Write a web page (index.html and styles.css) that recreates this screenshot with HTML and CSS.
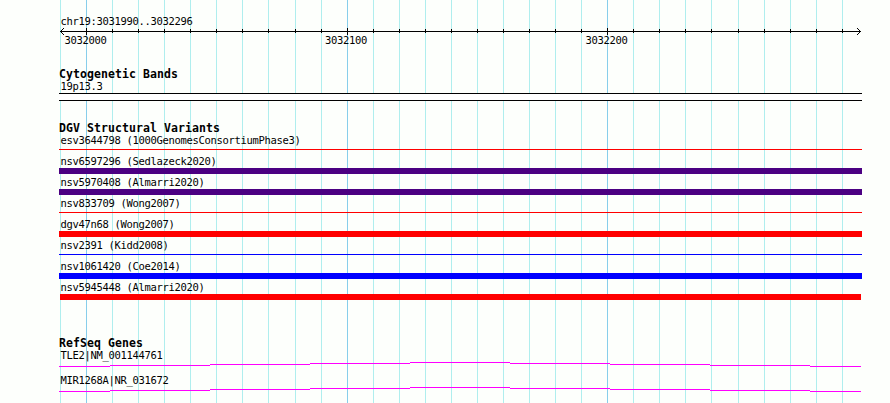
FILE: index.html
```
<!DOCTYPE html>
<html lang="en">
<head>
<meta charset="utf-8">
<title>chr19:3031990..3032296</title>
<link rel="stylesheet" href="styles.css">
</head>
<body>
<main class="browser">
  <svg class="grid" width="890" height="403" shape-rendering="crispEdges" aria-hidden="true">
    <path class="minor" d="M60.5 0V403M112.5 0V403M138.5 0V403M164.5 0V403M190.5 0V403M216.5 0V403M242.5 0V403M268.5 0V403M295.5 0V403M321.5 0V403M373.5 0V403M399.5 0V403M425.5 0V403M451.5 0V403M477.5 0V403M503.5 0V403M529.5 0V403M555.5 0V403M581.5 0V403M633.5 0V403M659.5 0V403M685.5 0V403M711.5 0V403M738.5 0V403M764.5 0V403M790.5 0V403M816.5 0V403M842.5 0V403"/>
    <path class="major" d="M86.5 0V403M347.5 0V403M607.5 0V403"/>
  </svg>
  <section class="ruler">
    <div class="label">chr19:3031990..3032296</div>
    <svg class="axis" width="803" height="7" viewBox="59 28 803 7" shape-rendering="crispEdges">
      <path d="M60 31.5H861M112.5 29v4M138.5 29v4M164.5 29v4M190.5 29v4M216.5 29v4M242.5 29v4M268.5 29v4M295.5 29v4M321.5 29v4M373.5 29v4M399.5 29v4M425.5 29v4M451.5 29v4M477.5 29v4M503.5 29v4M529.5 29v4M555.5 29v4M581.5 29v4M633.5 29v4M659.5 29v4M685.5 29v4M711.5 29v4M738.5 29v4M764.5 29v4M790.5 29v4M816.5 29v4M842.5 29v4M86.5 28v7M347.5 28v7M607.5 28v7"/>
      <path d="M61 30.5h1M62 29.5h1M63 28.5h1M61 32.5h1M62 33.5h1M63 34.5h1M859 30.5h1M858 29.5h1M857 28.5h1M859 32.5h1M858 33.5h1M857 34.5h1"/>
    </svg>
    <div class="scale"><span>3032000</span><span>3032100</span><span>3032200</span></div>
  </section>
  <section class="track bands">
    <h2>Cytogenetic Bands</h2>
    <div class="label">19p13.3</div>
    <div class="band"></div>
  </section>
  <section class="track variants">
    <h2>DGV Structural Variants</h2>
    <div class="variant thin loss"><div class="label">esv3644798 (1000GenomesConsortiumPhase3)</div><div class="bar"></div></div>
    <div class="variant inversion"><div class="label">nsv6597296 (Sedlazeck2020)</div><div class="bar"></div></div>
    <div class="variant inversion"><div class="label">nsv5970408 (Almarri2020)</div><div class="bar"></div></div>
    <div class="variant thin loss"><div class="label">nsv833709 (Wong2007)</div><div class="bar"></div></div>
    <div class="variant loss"><div class="label">dgv47n68 (Wong2007)</div><div class="bar"></div></div>
    <div class="variant thin gain"><div class="label">nsv2391 (Kidd2008)</div><div class="bar"></div></div>
    <div class="variant gain"><div class="label">nsv1061420 (Coe2014)</div><div class="bar"></div></div>
    <div class="variant loss inset"><div class="label">nsv5945448 (Almarri2020)</div><div class="bar"></div></div>
  </section>
  <section class="track genes">
    <h2>RefSeq Genes</h2>
    <div class="gene"><div class="label">TLE2|NM_001144761</div>
      <svg width="803" height="5" viewBox="59 0 803 5" shape-rendering="crispEdges"><path d="M59 4.5H110M110 3.5H210M210 2.5H310M310 1.5H410M410 .5H510M510 1.5H610M610 2.5H710M710 3.5H810M810 4.5H861"/></svg></div>
    <div class="gene"><div class="label">MIR1268A|NR_031672</div>
      <svg width="803" height="5" viewBox="59 0 803 5" shape-rendering="crispEdges"><path d="M59 4.5H110M110 3.5H210M210 2.5H310M310 1.5H410M410 .5H510M510 1.5H610M610 2.5H710M710 3.5H810M810 4.5H861"/></svg></div>
  </section>
</main>
</body>
</html>
```
FILE: styles.css
```
* { box-sizing: border-box; }
body { margin: 0; background: #fdfffc; }
.browser {
  position: relative;
  width: 890px;
  height: 403px;
  padding: 15px 28px 0 59px;
  overflow: hidden;
  color: #000;
  font: 10.5px/12px "DejaVu Sans Mono", monospace;
  letter-spacing: -0.321px;
}
svg { display: block; fill: none; stroke-width: 1px; }
.grid { position: absolute; top: 0; left: 0; }
.minor { stroke: #afeeee; }
.major { stroke: #87ceeb; }
section { position: relative; }
.label { height: 12px; padding-left: 1.5px; line-height: 13px; white-space: pre; }
.ruler { height: 53px; }
.axis { margin-top: 1px; stroke: #000; }
.scale { display: flex; gap: 218.5px; padding-left: 5.5px; line-height: 10px; }
.scale span { width: 42px; }
h2 {
  height: 12px;
  margin: 0;
  font: bold 11.5px/13px "DejaVu Sans Mono", monospace;
  letter-spacing: 0.076px;
  white-space: pre;
}
.bands { height: 54px; }
.band { height: 8px; margin-top: 1px; background: #fff; border: solid #000; border-width: 1px 0; }
.variants { height: 215px; }
.variant { height: 21px; }
.bar { height: 6px; margin-top: 1px; }
.thin .bar { height: 1px; margin-top: 3px; }
.loss .bar { background: #f00; }
.gain .bar { background: #00f; }
.inversion .bar { background: #4b0082; }
.inset .bar { width: 801px; margin-left: 1px; }
.gene { height: 25px; }
.gene svg { margin-top: 1px; stroke: #f0f; }
```
